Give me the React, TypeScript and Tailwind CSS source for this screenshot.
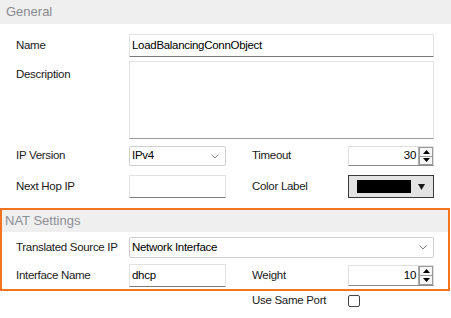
import React from "react";

const font = { fontFamily: '"Liberation Sans", Arial, sans-serif' };

function Chevron() {
  return (
    <svg width="8" height="5" viewBox="0 0 8 5" className="shrink-0">
      <path d="M0.5 0.5 L4 4 L7.5 0.5" fill="none" stroke="#7a7a7a" strokeWidth="0.9" />
    </svg>
  );
}

function TextInput({ value, w }: { value?: string; w: string }) {
  return (
    <div
      className={`${w} h-[23px] bg-white border border-[#e2e2e2] border-b-[#7a7a7a] rounded-[1px] flex items-center pl-[2px] text-[11.5px] tracking-[-0.3px] text-black`}
    >
      {value}
    </div>
  );
}

function Select({ value, w, h }: { value: string; w: string; h: string }) {
  return (
    <div
      className={`${w} ${h} bg-white border border-[#cfcfcf] rounded-[2px] flex items-center justify-between pl-[2px] pr-[6px] text-[11.5px] tracking-[-0.3px] text-black`}
    >
      <span>{value}</span>
      <Chevron />
    </div>
  );
}

function Tri({ up }: { up?: boolean }) {
  return (
    <svg width="7" height="4" viewBox="0 0 7 4">
      {up ? <path d="M0 4 L7 4 L3.5 0 Z" fill="#000" /> : <path d="M0 0 L7 0 L3.5 4 Z" fill="#000" />}
    </svg>
  );
}

function Spinner({ value, h }: { value: string; h: string }) {
  return (
    <div className={`w-[86px] ${h} flex bg-white border border-[#e0e0e0] border-b-[#8a8a8a]`}>
      <div className="flex-1 flex items-center justify-end pr-[2px] text-[11.5px] tracking-[-0.3px] text-black">
        {value}
      </div>
      <div className="w-[15px] flex flex-col bg-[#dcdcdc] border-l border-[#a8a8a8]">
        <div className="flex-1 flex items-center justify-center bg-[#f7f7f7] border border-[#9a9a9a]">
          <Tri up />
        </div>
        <div className="flex-1 flex items-center justify-center bg-[#f7f7f7] border border-[#9a9a9a] border-t-0">
          <Tri />
        </div>
      </div>
    </div>
  );
}

function Label({ children, w = "w-[113px]" }: { children: React.ReactNode; w?: string }) {
  return <div className={`${w} shrink-0 text-[11.5px] tracking-[-0.3px] text-[#1a1a1a]`}>{children}</div>;
}

export default function App() {
  return (
    <div className="w-[451px] h-[318px] bg-white overflow-hidden flex flex-col" style={font}>
      <div className="h-[24px] bg-[#efefef] pl-[6px] text-[13px] leading-[24px] text-[#8a8a8f]">General</div>

      <div className="pl-[16px] flex flex-col">
        <div className="mt-[10px] h-[23px] flex items-center">
          <Label>Name</Label>
          <TextInput value="LoadBalancingConnObject" w="w-[305px]" />
        </div>
        <div className="mt-[4px] h-[78px] flex items-start">
          <Label>
            <div className="mt-[5px]">Description</div>
          </Label>
          <div className="w-[305px] h-[78px] bg-white border border-[#e2e2e2] border-b-[#9a9a9a] rounded-[1px]" />
        </div>
        <div className="mt-[7px] h-[20px] flex items-center">
          <Label>IP Version</Label>
          <Select value="IPv4" w="w-[97px]" h="h-[20px]" />
          <div className="w-[26px]" />
          <Label w="w-[96px]">Timeout</Label>
          <Spinner value="30" h="h-[20px]" />
        </div>
        <div className="mt-[9px] h-[23px] flex items-center">
          <Label>Next Hop IP</Label>
          <div className="h-[22px] flex items-center">
            <TextInput w="w-[97px]" />
          </div>
          <div className="w-[26px]" />
          <Label w="w-[96px]">Color Label</Label>
          <div className="w-[86px] h-[23px] border border-[#3a3a3a] bg-[#e3e3e3] flex items-center pl-[8px] pr-[8px] justify-between">
            <div className="w-[54px] h-[13px] bg-black" />
            <svg width="7" height="6" viewBox="0 0 7 6">
              <path d="M0 0 L7 0 L3.5 6 Z" fill="#1a1a1a" />
            </svg>
          </div>
        </div>
      </div>

      <div className="mt-[10px] w-[450px] h-[83px] border-2 border-[#f47321] flex flex-col">
        <div className="h-[22px] bg-[#efefef] pl-[3px] text-[13px] leading-[22px] text-[#8e8e96]">NAT Settings</div>
        <div className="pl-[14px] flex flex-col">
          <div className="mt-[5px] h-[21px] flex items-center">
            <Label>Translated Source IP</Label>
            <Select value="Network Interface" w="w-[305px]" h="h-[21px]" />
          </div>
          <div className="mt-[6px] h-[23px] flex items-center">
            <Label>Interface Name</Label>
            <TextInput value="dhcp" w="w-[97px]" />
            <div className="w-[26px]" />
            <Label w="w-[96px]">Weight</Label>
            <Spinner value="10" h="h-[21px]" />
          </div>
        </div>
      </div>

      <div className="pl-[16px] mt-[3px] h-[14px] flex items-center">
        <div className="w-[113px]" />
        <div className="w-[97px]" />
        <div className="w-[26px]" />
        <Label w="w-[96px]">Use Same Port</Label>
        <div className="w-[12px] h-[12px] border border-[#444] rounded-[2px] bg-white" />
      </div>
    </div>
  );
}
